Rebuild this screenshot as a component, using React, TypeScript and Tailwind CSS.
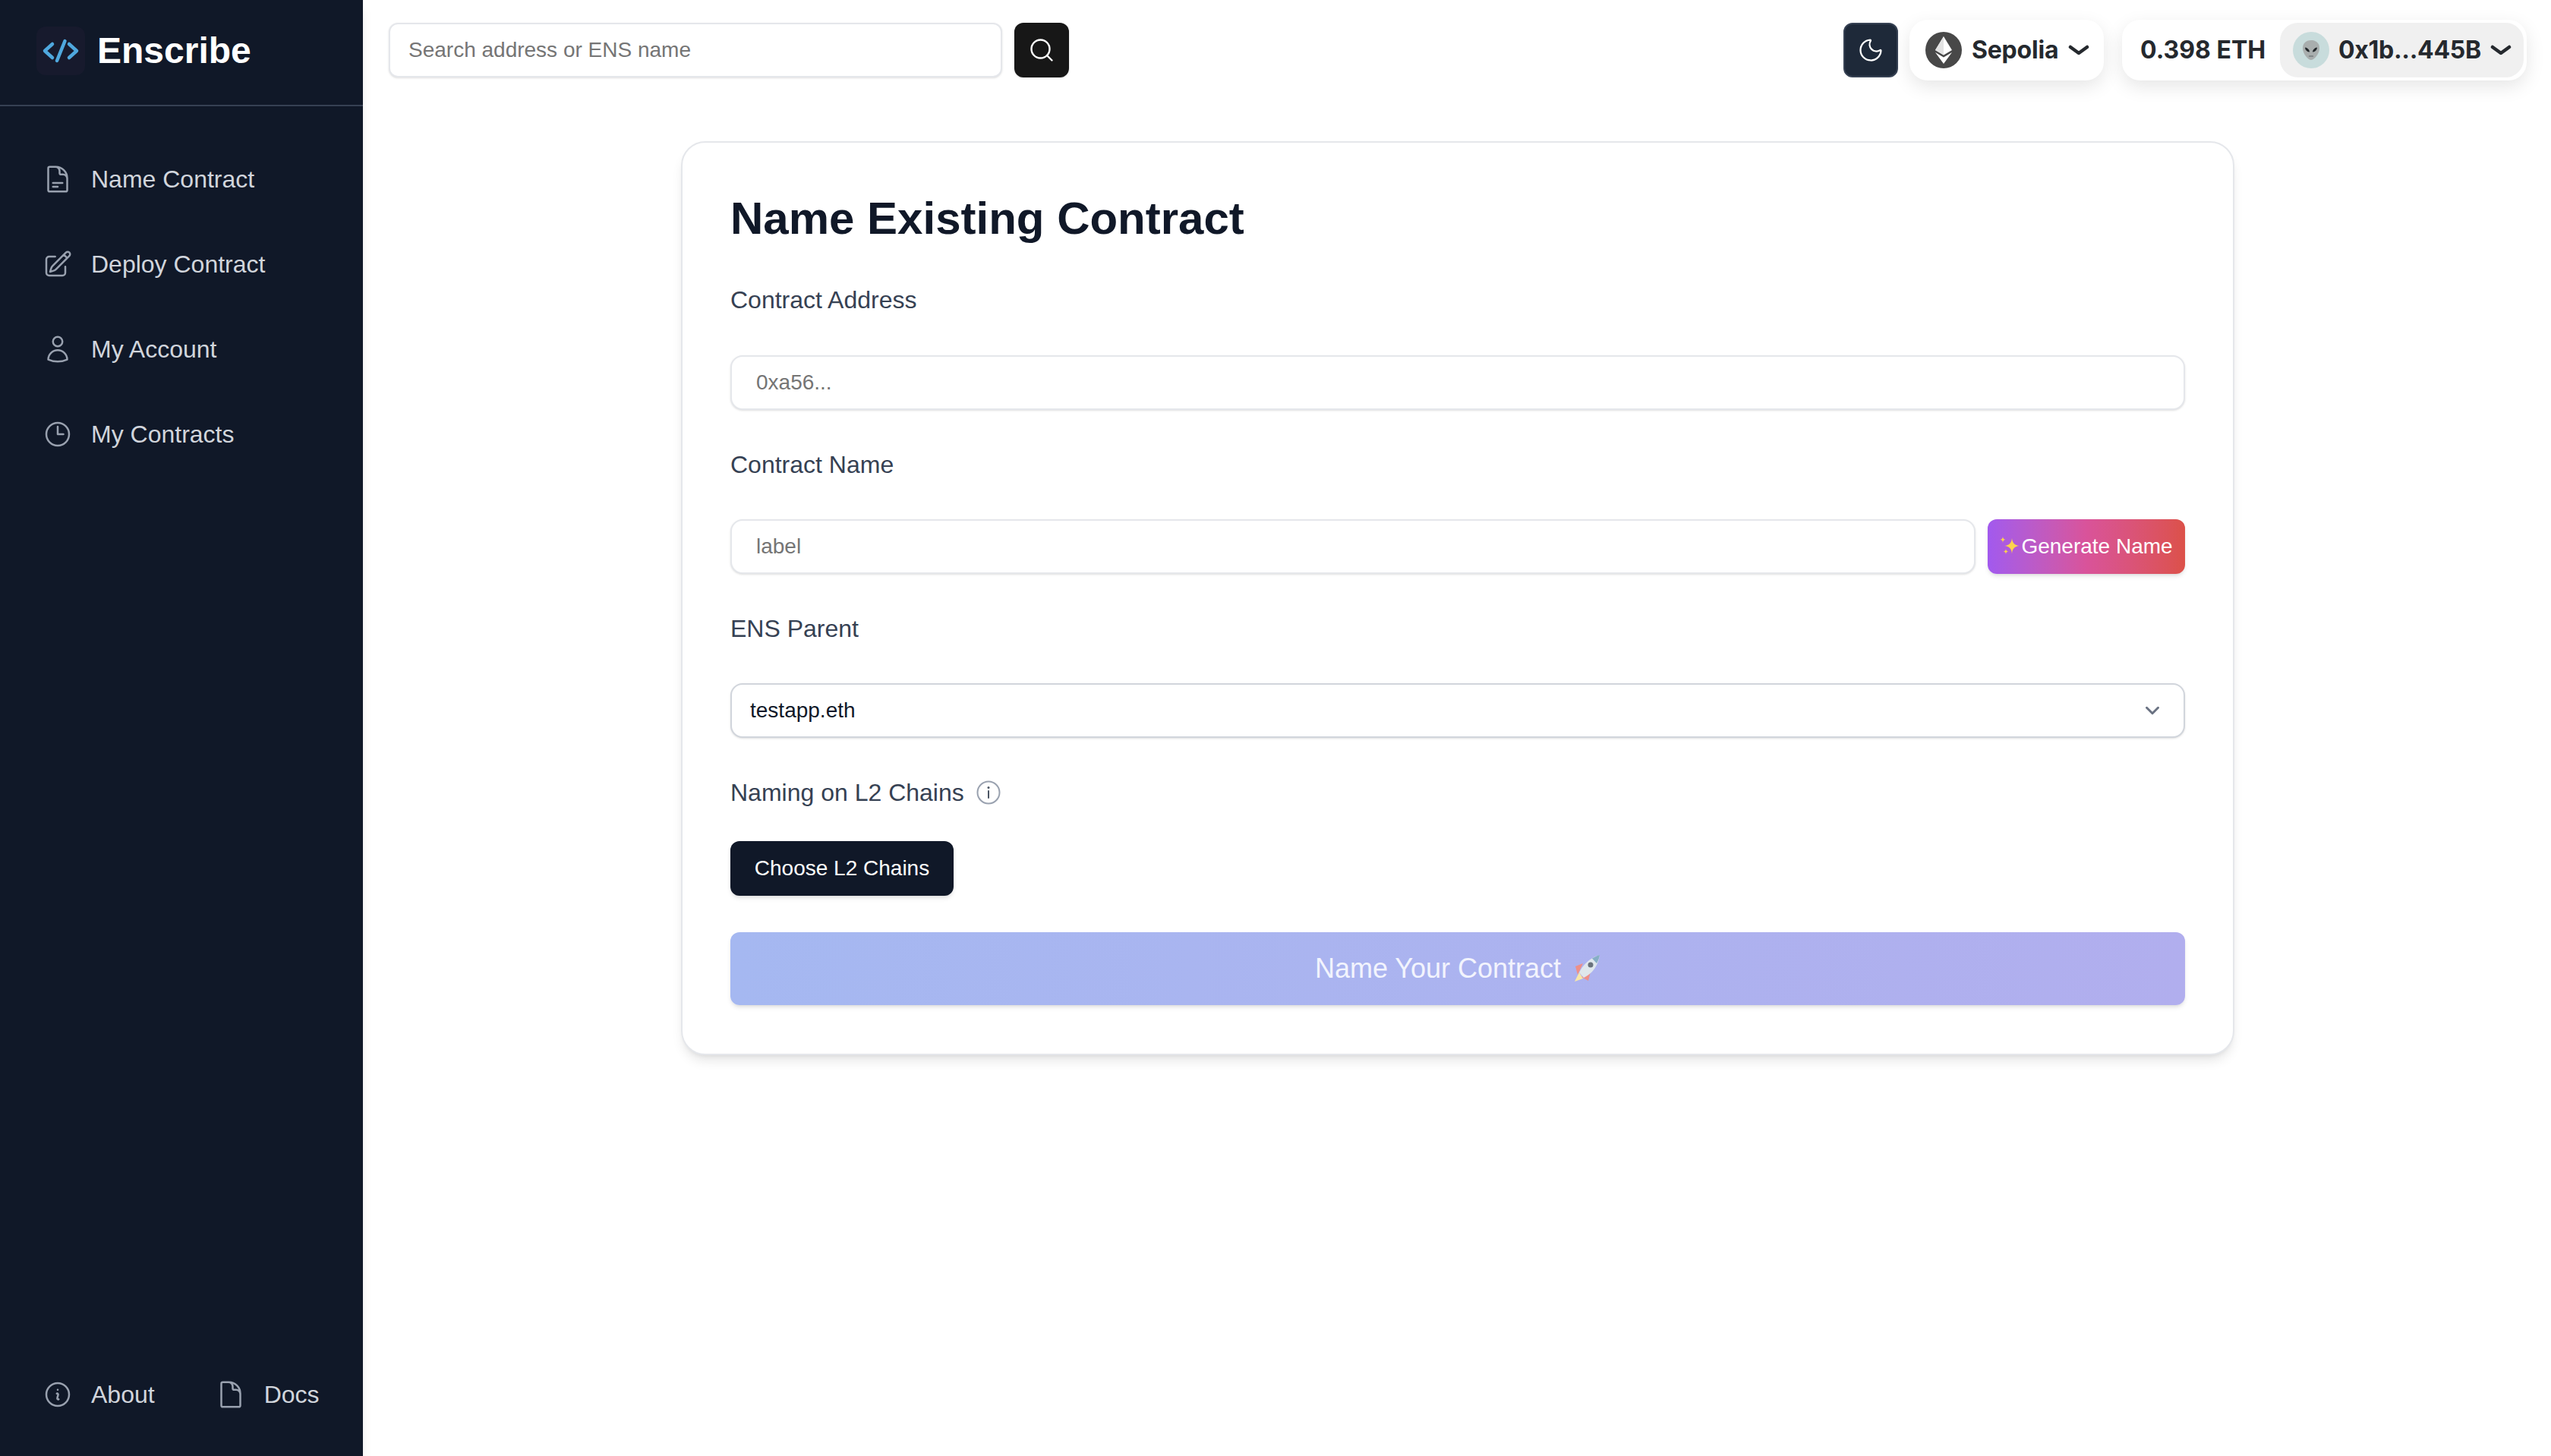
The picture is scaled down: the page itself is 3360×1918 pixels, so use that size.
import { ChevronDown, Moon, Search } from "lucide-react"
import {
  HiOutlineClock,
  HiOutlineDocument,
  HiOutlineDocumentText,
  HiOutlineInformationCircle,
  HiOutlinePencilSquare,
  HiOutlineUser,
} from "react-icons/hi2"

const navItems = [
  { label: "Name Contract", icon: HiOutlineDocumentText },
  { label: "Deploy Contract", icon: HiOutlinePencilSquare },
  { label: "My Account", icon: HiOutlineUser },
  { label: "My Contracts", icon: HiOutlineClock },
]

const inputClass =
  "h-[72px] rounded-2xl border-2 border-gray-200 bg-white px-8 text-[28px] text-gray-900 shadow-sm outline-none placeholder:text-[#757575]"

function Caret() {
  return (
    <svg width="28" height="16" viewBox="0 0 28 16" fill="none" className="shrink-0">
      <path d="M3 4l11 8 11-8" stroke="#25292e" strokeWidth="4.5" strokeLinecap="round" strokeLinejoin="round" />
    </svg>
  )
}

function LogoMark() {
  return (
    <svg width="64" height="64" viewBox="0 0 64 64" fill="none">
      <path d="M21 23l-10 9 10 9M43 23l10 9-10 9M37.500 19l-10.500 26" stroke="#4fa8de" strokeWidth="4.500" strokeLinecap="round" strokeLinejoin="round" />
    </svg>
  )
}

function EthIcon() {
  return (
    <svg width="48" height="48" viewBox="0 0 48 48" className="shrink-0">
      <circle cx="24" cy="24" r="24" fill="#484848" />
      <path d="M24 6l-11 18 11 6.500L35 24z" fill="#fff" />
      <path d="M24 6v24.500L13 24z" fill="#e2e2e2" />
      <path d="M13 27l11 15 11-15-11 6.500z" fill="#fff" />
    </svg>
  )
}

function AlienAvatar() {
  return (
    <svg width="48" height="48" viewBox="0 0 48 48" className="shrink-0">
      <circle cx="24" cy="24" r="24" fill="#c8dcdc" />
      <path d="M24 11c-7 0-11 4.500-11 10.500C13 29 20 37 24 37s11-8 11-15.500C35 15.500 31 11 24 11z" fill="#a9aeae" />
      <path d="M16 20.500c3 .2 6 3 6 6-3 .3-6-3-6-6zM32 20.500c-3 .2-6 3-6 6 3 .3 6-3 6-6z" fill="#23282b" />
      <path d="M21.500 32h5" stroke="#5d6365" strokeWidth="1.200" strokeLinecap="round" />
    </svg>
  )
}

function Sparkles() {
  return (
    <svg width="28" height="28" viewBox="0 0 28 28" className="shrink-0">
      <path d="M16 3c.7 6.500 3.500 9.300 10 10-6.500.7-9.300 3.500-10 10.500-.7-7-3.500-9.800-10-10.500 6.500-.7 9.300-3.500 10-10z" fill="#fcd34d" />
      <path d="M4 1c.3 2.500 1.300 3.500 3.500 3.800C5.300 5.100 4.300 6.100 4 9 3.700 6.100 2.700 5.100.500 4.800 2.700 4.500 3.700 3.500 4 1z" fill="#fcd34d" />
      <path d="M8 17c.3 2.200 1.200 3.100 3.300 3.400-2.100.3-3 1.200-3.300 3.600-.3-2.400-1.200-3.300-3.300-3.600 2.100-.3 3-1.200 3.300-3.400z" fill="#fcd34d" />
    </svg>
  )
}

function Rocket() {
  return (
    <svg width="36" height="36" viewBox="0 0 36 36" className="shrink-0">
      <path d="M8 23l-6 12 11-4z" fill="#f8e7a8" />
      <path d="M13 11L3 15l3 11zM23 22l-3 12-9-5z" fill="#ee8f88" />
      <path d="M35 0C24 3 14 11 8 23l6 7c12-6 19-16 21-30z" fill="#dfe7ec" />
      <path d="M35 0c-3.500 1-7 2.600-10 4.500l6 6.500c2-3.300 3.400-7 4-11z" fill="#86aec6" />
      <circle cx="23" cy="13" r="3.500" fill="#69727c" />
    </svg>
  )
}

function Sidebar() {
  return (
    <aside className="flex h-full w-[478px] shrink-0 flex-col bg-gray-900 shadow-lg">
      <div className="flex h-[140px] items-center gap-4 border-b-2 border-gray-700 pb-[4px] pl-12">
        <div className="flex size-16 items-center justify-center rounded-xl bg-[#171a2d]">
          <LogoMark />
        </div>
        <span className="text-[48px] leading-[64px] font-bold text-white">Enscribe</span>
      </div>

      <nav className="flex flex-1 flex-col gap-4 pt-12">
        {navItems.map((item) => (
          <a key={item.label} className="flex h-24 items-center gap-6 pl-14 text-[32px] leading-[48px] text-gray-300">
            <item.icon size={40} className="text-gray-400" />
            {item.label}
          </a>
        ))}
      </nav>

      <div className="flex items-center pb-[57px] pl-14 text-[32px] leading-[48px] text-gray-300">
        <a className="flex items-center gap-6">
          <HiOutlineInformationCircle size={40} className="text-gray-400" />
          About
        </a>
        <a className="ml-20 flex items-center gap-6">
          <HiOutlineDocument size={40} className="text-gray-400" />
          Docs
        </a>
      </div>
    </aside>
  )
}

function TopBar() {
  return (
    <header className="flex h-[132px] items-center justify-between pr-8 pl-[34px]">
      <div className="flex items-center gap-4">
        <input
          placeholder="Search address or ENS name"
          className="h-[72px] w-[808px] rounded-xl border-2 border-gray-200 bg-white px-6 text-[28px] text-gray-900 shadow-sm outline-none placeholder:text-[#757575]"
        />
        <button className="flex size-[72px] items-center justify-center rounded-xl bg-[#171717] shadow-sm">
          <Search size={36} strokeWidth={1.6} className="text-white" />
        </button>
      </div>

      <div className="flex items-center text-[32px] font-bold text-[#25292e] [font-family:Inter,sans-serif]">
        <button className="mr-[15px] flex size-[72px] items-center justify-center rounded-xl border-2 border-gray-700 bg-gray-800">
          <Moon size={36} strokeWidth={1.5} className="text-white" />
        </button>
        <div className="mr-6 flex h-20 w-[256px] items-center gap-[13px] rounded-3xl bg-white pl-[21px] tracking-[-0.2px] shadow-[0_8px_24px_rgba(0,0,0,0.1)]">
          <EthIcon />
          <span>Sepolia</span>
          <Caret />
        </div>
        <div className="flex h-20 w-[533px] items-center justify-between rounded-3xl bg-white pr-1 pl-6 shadow-[0_8px_24px_rgba(0,0,0,0.1)]">
          <span>0.398 ETH</span>
          <div className="flex h-[72px] w-[321px] items-center gap-3 rounded-3xl bg-[#f0f0f0] pl-[17px]">
            <AlienAvatar />
            <span className="tracking-[-0.3px]">0x1b...445B</span>
            <Caret />
          </div>
        </div>
      </div>
    </header>
  )
}

function NameForm() {
  return (
    <div className="ml-[2px] flex justify-center">
      <section className="mt-[54px] w-[2046px] rounded-[32px] border-2 border-gray-200 bg-white px-[63px] pt-[64px] pb-[64px] shadow-lg">
        <h1 className="mb-[47px] text-[60px] leading-[72px] font-bold text-gray-900">Name Existing Contract</h1>

        <label className="mb-[49px] block text-[32px] leading-[48px] text-gray-700">Contract Address</label>
        <input placeholder="0xa56..." className={`${inputClass} mb-12 block w-full`} />

        <label className="mb-12 block text-[32px] leading-[48px] text-gray-700">Contract Name</label>
        <div className="mb-12 flex gap-4">
          <input placeholder="label" className={`${inputClass} min-w-0 flex-1`} />
          <button className="flex h-[72px] w-[260px] items-center justify-center rounded-xl bg-gradient-to-r from-[#a259ee] via-[#d9539a] to-[#dc5149] text-[28px] text-white shadow-md">
            <Sparkles />
            Generate Name
          </button>
        </div>

        <label className="mb-12 block text-[32px] leading-[48px] text-gray-700">ENS Parent</label>
        <button className="mb-12 flex h-[72px] w-full items-center justify-between rounded-2xl border-2 border-gray-300 bg-white pr-[26px] pl-6 text-[28px] text-gray-900 shadow-sm">
          testapp.eth
          <ChevronDown size={30} strokeWidth={2.4} className="text-gray-500" />
        </button>

        <div className="mb-10 flex items-center gap-4 text-[32px] leading-[48px] text-gray-700">
          Naming on L2 Chains
          <svg width="32" height="32" viewBox="0 0 32 32" fill="none" className="text-gray-400">
            <circle cx="16" cy="16" r="14.500" stroke="currentColor" strokeWidth="2" />
            <path d="M16 14v9" stroke="#4b5563" strokeWidth="2" strokeLinecap="round" />
            <circle cx="16" cy="9.500" r="1.500" fill="#4b5563" />
          </svg>
        </div>
        <button className="mb-12 block h-[72px] w-[294px] rounded-xl bg-gray-900 text-[28px] text-white shadow-md">
          Choose L2 Chains
        </button>

        <button className="flex h-24 w-full items-center justify-center gap-[16px] rounded-xl bg-gradient-to-r from-[#a5b8f1] to-[#b1aeee] text-[36px] text-white/85 shadow-md">
          Name Your Contract
          <Rocket />
        </button>
      </section>
    </div>
  )
}

export default function App() {
  return (
    <div className="flex h-[1918px] w-[3360px] overflow-hidden bg-white [font-family:'Liberation_Sans',Arial,sans-serif]">
      <Sidebar />
      <main className="flex-1">
        <TopBar />
        <NameForm />
      </main>
    </div>
  )
}
